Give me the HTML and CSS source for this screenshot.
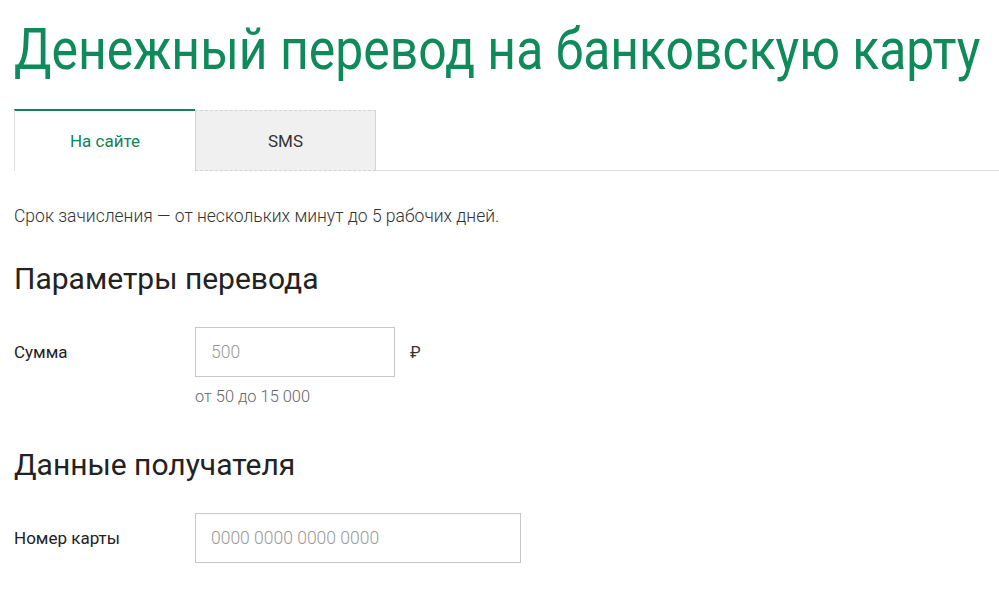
FILE: index.html
```
<!DOCTYPE html>
<html lang="ru">
<head>
<meta charset="utf-8">
<title>Денежный перевод на банковскую карту</title>
<link rel="stylesheet" href="styles.css">
</head>
<body>
<div class="page">
  <h1 class="title">Денежный перевод на банковскую карту</h1>
  <div class="tabs">
    <div class="tab tab-active">На сайте</div>
    <div class="tab tab-inactive">SMS</div>
    <div class="tab-rest"></div>
  </div>
  <p class="note">Срок зачисления — от нескольких минут до 5 рабочих дней.</p>
  <h2 class="section">Параметры перевода</h2>
  <div class="field">
    <div class="label">Сумма</div>
    <div class="control">
      <div class="input-row">
        <input class="input input-sum" type="text" placeholder="500">
        <span class="currency">₽</span>
      </div>
      <div class="hint">от 50 до 15 000</div>
    </div>
  </div>
  <h2 class="section section-2">Данные получателя</h2>
  <div class="field">
    <div class="label">Номер карты</div>
    <div class="control">
      <input class="input input-card" type="text" placeholder="0000 0000 0000 0000">
    </div>
  </div>
</div>
</body>
</html>
```
FILE: styles.css
```
* { box-sizing: border-box; }
html, body { margin: 0; padding: 0; background: #fff; }
body { font-family: Roboto, "Noto Sans", sans-serif; color: #333; overflow: hidden; }
.page { padding: 17px 0 0 14px; }
.title {
  margin: 0;
  font-size: 57px;
  font-weight: 400;
  line-height: 66px;
  color: #0f8a5a;
  white-space: nowrap;
  transform: scaleX(0.875);
  transform-origin: left center;
}
.tabs {
  display: flex;
  margin-top: 26px;
  height: 62px;
}
.tab {
  width: 181px;
  display: flex;
  align-items: center;
  justify-content: center;
  font-size: 17px;
}
.tab-active {
  border-top: 2px solid #1a7f56;
  border-left: 1px solid #ddd;
  color: #17805a;
}
.tab-inactive {
  background: #f0f0f0;
  border: 1px dashed #d4d4d4;
  border-left-style: solid;
  border-right-style: solid;
  color: #333;
  margin-top: 1px;
}
.tab-rest {
  flex: 1;
  border-bottom: 1px solid #ddd;
}
.note {
  margin: 35px 0 0;
  font-size: 17.5px;
  font-weight: 300;
  line-height: 20px;
  color: #333;
}
.section {
  margin: 36px 0 0;
  font-size: 30px;
  font-weight: 400;
  line-height: 34px;
  color: #222;
}
.section-2 { margin-top: 42px; }
.field {
  display: flex;
  margin-top: 31px;
}
.label {
  width: 181px;
  font-size: 17px;
  line-height: 50px;
  color: #222;
}
.input-row { display: flex; align-items: center; }
.input {
  height: 50px;
  border: 1px solid #c8c8c8;
  padding: 0 15px;
  font-family: Roboto, "Noto Sans", sans-serif;
  font-size: 17.5px;
  font-weight: 300;
  color: #333;
  outline: none;
}
.input::placeholder { color: #999; }
.input-sum { width: 200px; }
.input-card { width: 326px; }
.currency {
  margin-left: 15px;
  font-size: 16px;
  color: #333;
}
.hint {
  margin-top: 11px;
  font-size: 16.4px;
  font-weight: 300;
  line-height: 18px;
  color: #666;
}
```
